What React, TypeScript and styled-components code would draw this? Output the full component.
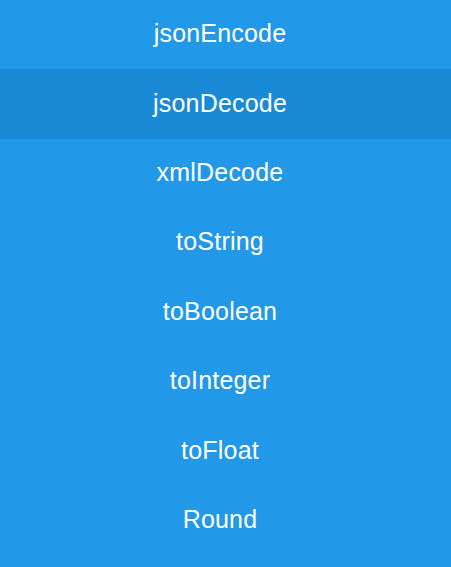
import { createGlobalStyle, styled } from "styled-components";

const GlobalStyle = createGlobalStyle`
  html, body {
    margin: 0;
    padding: 0;
    background: #2298e8;
  }
`;

const items = [
  "jsonEncode",
  "jsonDecode",
  "xmlDecode",
  "toString",
  "toBoolean",
  "toInteger",
  "toFloat",
  "Round",
];

const App = () => {
  return (
    <>
      <GlobalStyle />
      <Menu>
        {items.map((name) => (
          <MenuItem key={name} $active={name === "jsonDecode"}>
            {name}
          </MenuItem>
        ))}
      </Menu>
    </>
  );
};

export default App;

const Menu = styled.ul`
  list-style: none;
  margin: 0;
  padding: 0;
  width: 451px;
  height: 567px;
  background-color: #2298e8;
  display: flex;
  flex-direction: column;
`;

const MenuItem = styled.li<{ $active?: boolean }>`
  height: 69.4px;
  box-sizing: border-box;
  padding: 0 11px 2px 0;
  flex-shrink: 0;
  display: flex;
  align-items: center;
  justify-content: center;
  font-family: "Liberation Sans", Arial, sans-serif;
  font-size: 25px;
  letter-spacing: 0.2px;
  color: #ffffff;
  background-color: ${({ $active }) => ($active ? "#1a89d6" : "transparent")};
  cursor: pointer;
`;
